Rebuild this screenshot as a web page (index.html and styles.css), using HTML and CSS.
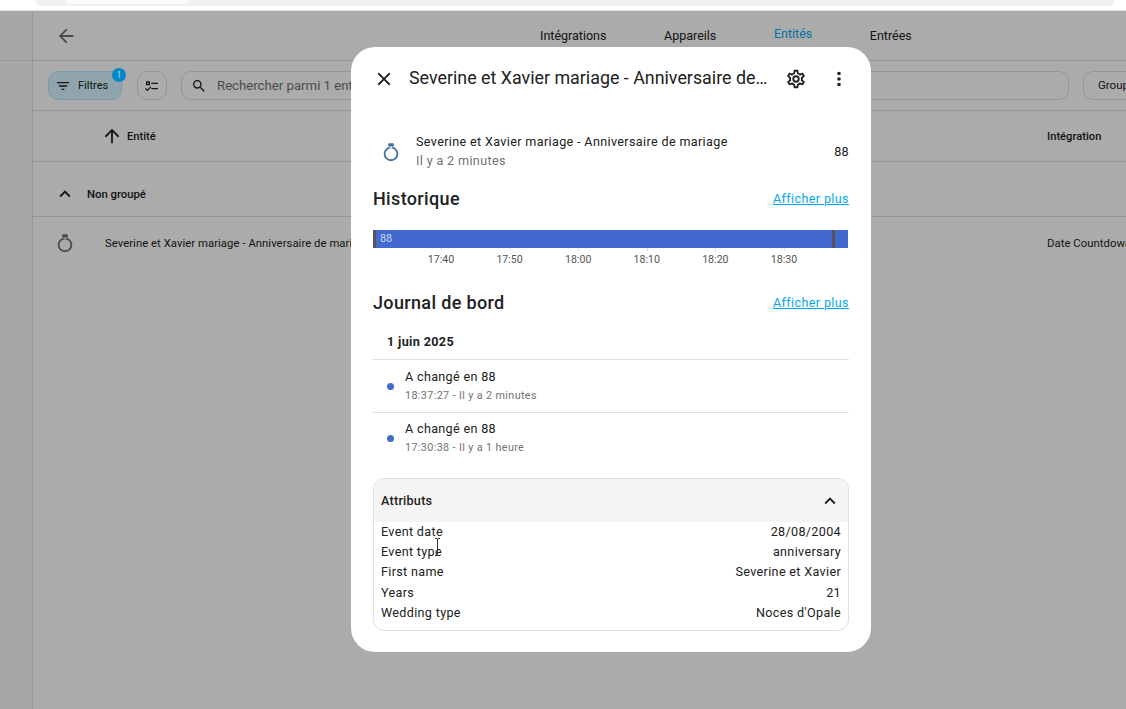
FILE: index.html
```html
<!DOCTYPE html>
<html>

<head>
    <title>Entités</title>
    <link rel="stylesheet" href="styles.css">
</head>

<body>
    <div class="browserbar">
        <div class="browserbar-inner">
            <div class="browserbar-tab"></div>
        </div>
    </div>

    <div class="app">
        <aside class="sidebar">
            <div class="sidebar-head"></div>
        </aside>

        <main class="main">
            <div class="toolbar">
                <svg class="icon back-icon" viewBox="0 0 24 24"><path d="M20,11V13H8L13.5,18.5L12.08,19.92L4.16,12L12.08,4.08L13.5,5.5L8,11H20Z"/></svg>
                <nav class="tabs">
                    <a>Intégrations</a>
                    <a>Appareils</a>
                    <a class="active">Entités</a>
                    <a>Entrées</a>
                </nav>
            </div>

            <div class="filterbar">
                <div class="filter-btn">
                    <svg class="icon" viewBox="0 0 24 24"><path d="M6,13H18V11H6M3,6V8H21V6M10,18H14V16H10V18Z"/></svg>
                    <span>Filtres</span>
                    <span class="badge">1</span>
                </div>
                <div class="select-btn">
                    <svg class="icon" viewBox="0 0 24 24"><path d="M3,5H9V11H3V5M5,7V9H7V7H5M11,7H21V9H11V7M11,15H21V17H11V15M5,20L1.5,16.5L2.91,15.09L5,17.17L9.59,12.59L11,14L5,20Z"/></svg>
                </div>
                <div class="search">
                    <svg class="icon" viewBox="0 0 24 24"><path d="M9.5,3A6.5,6.5 0 0,1 16,9.5C16,11.11 15.41,12.59 14.44,13.73L14.71,14H15.5L20.5,19L19,20.5L14,15.5V14.71L13.73,14.44C12.59,15.41 11.11,16 9.5,16A6.5,6.5 0 0,1 3,9.5A6.5,6.5 0 0,1 9.5,3M9.5,5C7,5 5,7 5,9.5C5,12 7,14 9.5,14C12,14 14,12 14,9.5C14,7 12,5 9.5,5Z"/></svg>
                    <span>Rechercher parmi 1 entité</span>
                </div>
                <div class="group-btn">Grouper par</div>
            </div>

            <div class="table-head">
                <div class="col-name">
                    <svg class="icon" viewBox="0 0 24 24"><path d="M13,20H11V8L5.5,13.5L4.08,12.08L12,4.16L19.92,12.08L18.5,13.5L13,8V20Z"/></svg>
                    <span>Entité</span>
                </div>
                <div class="col-integration">Intégration</div>
            </div>

            <div class="group-row">
                <svg class="icon" viewBox="0 0 24 24"><path d="M7.41,15.41L12,10.83L16.59,15.41L18,14L12,8L6,14L7.41,15.41Z"/></svg>
                <span>Non groupé</span>
            </div>

            <div class="table-row">
                <svg class="icon ring" viewBox="0 0 24 24"><path d="M12,6A8,8 0 0,0 4,14A8,8 0 0,0 12,22A8,8 0 0,0 20,14A8,8 0 0,0 12,6M12,8A6,6 0 0,1 18,14A6,6 0 0,1 12,20A6,6 0 0,1 6,14A6,6 0 0,1 12,8M9.5,2.5H14.5L15.5,4.5L12,8.5L8.5,4.5L9.5,2.5Z"/></svg>
                <span class="row-name">Severine et Xavier mariage - Anniversaire de mariage</span>
                <span class="row-integration">Date Countdown</span>
            </div>
        </main>

        <div class="scrim">
            <div class="dialog">
                <header class="dialog-head">
                    <svg class="icon" viewBox="0 0 24 24"><path d="M19,6.41L17.59,5L12,10.59L6.41,5L5,6.41L10.59,12L5,17.59L6.41,19L12,13.41L17.59,19L19,17.59L13.41,12L19,6.41Z"/></svg>
                    <h2>Severine et Xavier mariage - Anniversaire de mariage</h2>
                    <svg class="icon" viewBox="0 0 24 24"><path d="M12,8A4,4 0 0,1 16,12A4,4 0 0,1 12,16A4,4 0 0,1 8,12A4,4 0 0,1 12,8M12,10A2,2 0 0,0 10,12A2,2 0 0,0 12,14A2,2 0 0,0 14,12A2,2 0 0,0 12,10M10,22C9.75,22 9.54,21.82 9.5,21.58L9.13,18.93C8.5,18.68 7.96,18.34 7.44,17.94L4.95,18.95C4.73,19.03 4.46,18.95 4.34,18.73L2.34,15.27C2.21,15.05 2.27,14.78 2.46,14.63L4.57,12.97L4.5,12L4.57,11L2.46,9.37C2.27,9.22 2.21,8.95 2.34,8.73L4.34,5.27C4.46,5.05 4.73,4.96 4.95,5.05L7.44,6.05C7.96,5.66 8.5,5.32 9.13,5.07L9.5,2.42C9.54,2.18 9.75,2 10,2H14C14.25,2 14.46,2.18 14.5,2.42L14.87,5.07C15.5,5.32 16.04,5.66 16.56,6.05L19.05,5.05C19.27,4.96 19.54,5.05 19.66,5.27L21.66,8.73C21.79,8.95 21.73,9.22 21.54,9.37L19.43,11L19.5,12L19.43,13L21.54,14.63C21.73,14.78 21.79,15.05 21.66,15.27L19.66,18.73C19.54,18.95 19.27,19.04 19.05,18.95L16.56,17.95C16.04,18.34 15.5,18.68 14.87,18.93L14.5,21.58C14.46,21.82 14.25,22 14,22H10M11.25,4L10.88,6.61C9.68,6.86 8.62,7.5 7.85,8.39L5.44,7.35L4.69,8.65L6.8,10.2C6.4,11.37 6.4,12.64 6.8,13.8L4.68,15.36L5.43,16.66L7.86,15.62C8.63,16.5 9.68,17.14 10.87,17.38L11.24,20H12.76L13.13,17.39C14.32,17.14 15.37,16.5 16.14,15.62L18.57,16.66L19.32,15.36L17.2,13.81C17.6,12.64 17.6,11.37 17.2,10.2L19.31,8.65L18.56,7.35L16.15,8.39C15.38,7.5 14.32,6.86 13.12,6.62L12.75,4H11.25Z"/></svg>
                    <svg class="icon" viewBox="0 0 24 24"><path d="M12,16A2,2 0 0,1 14,18A2,2 0 0,1 12,20A2,2 0 0,1 10,18A2,2 0 0,1 12,16M12,10A2,2 0 0,1 14,12A2,2 0 0,1 12,14A2,2 0 0,1 10,12A2,2 0 0,1 12,10M12,4A2,2 0 0,1 14,6A2,2 0 0,1 12,8A2,2 0 0,1 10,6A2,2 0 0,1 12,4Z"/></svg>
                </header>

                <div class="state-row">
                    <svg class="icon ring-blue" viewBox="0 0 24 24"><path d="M12,6A8,8 0 0,0 4,14A8,8 0 0,0 12,22A8,8 0 0,0 20,14A8,8 0 0,0 12,6M12,8A6,6 0 0,1 18,14A6,6 0 0,1 12,20A6,6 0 0,1 6,14A6,6 0 0,1 12,8M9.5,2.5H14.5L15.5,4.5L12,8.5L8.5,4.5L9.5,2.5Z"/></svg>
                    <div class="state-info">
                        <div class="state-name">Severine et Xavier mariage - Anniversaire de mariage</div>
                        <div class="state-time">Il y a 2 minutes</div>
                    </div>
                    <div class="state-value">88</div>
                </div>

                <div class="section-head history-head">
                    <h3>Historique</h3>
                    <a>Afficher plus</a>
                </div>

                <div class="timeline">
                    <div class="timeline-bar">
                        <span class="timeline-mark"></span>
                        <span class="timeline-label">88</span>
                        <span class="timeline-mark"></span>
                    </div>
                    <div class="timeline-ticks">
                        <span>17:40</span>
                        <span>17:50</span>
                        <span>18:00</span>
                        <span>18:10</span>
                        <span>18:20</span>
                        <span>18:30</span>
                    </div>
                </div>

                <div class="section-head logbook-head">
                    <h3>Journal de bord</h3>
                    <a>Afficher plus</a>
                </div>

                <div class="log-date">1 juin 2025</div>
                <div class="log-entry">
                    <span class="dot"></span>
                    <div>
                        <div class="log-title">A changé en 88</div>
                        <div class="log-time">18:37:27 - Il y a 2 minutes</div>
                    </div>
                </div>
                <div class="log-entry">
                    <span class="dot"></span>
                    <div>
                        <div class="log-title">A changé en 88</div>
                        <div class="log-time">17:30:38 - Il y a 1 heure</div>
                    </div>
                </div>

                <section class="attributes">
                    <div class="attributes-head">
                        <span>Attributs</span>
                        <svg class="icon" viewBox="0 0 24 24"><path d="M7.41,15.41L12,10.83L16.59,15.41L18,14L12,8L6,14L7.41,15.41Z"/></svg>
                    </div>
                    <div class="attributes-body">
                        <div class="attr"><span>Event date</span><span>28/08/2004</span></div>
                        <div class="attr"><span>Event type</span><span>anniversary</span></div>
                        <div class="attr"><span>First name</span><span>Severine et Xavier</span></div>
                        <div class="attr"><span>Years</span><span>21</span></div>
                        <div class="attr"><span>Wedding type</span><span>Noces d'Opale</span></div>
                    </div>
                </section>
            </div>
        </div>

        <svg class="text-cursor" viewBox="0 0 7 18"><path d="M1,0.5H3L3.5,1L4,0.5H6M3.5,1V17M1,17.5H3L3.5,17L4,17.5H6" fill="none" stroke="#333" stroke-width="1"/></svg>
    </div>
</body>

</html>
```

FILE: styles.css
```css
* {
    box-sizing: border-box;
}

html,
body {
    height: 100%;
}

body {
    margin: 0;
    font-family: Roboto, "Liberation Sans", sans-serif;
    background-color: #fff;
    color: #212121;
    overflow: hidden;
}

h2,
h3 {
    margin: 0;
    font-weight: 500;
}

.icon {
    width: 22px;
    height: 22px;
    flex: none;
    fill: currentColor;
}

/* top strip of the browser */
.browserbar {
    height: 11px;
    padding-left: 35px;
    padding-right: 11px;
    border-bottom: 1px solid #e0e0e0;
}

.browserbar-inner {
    height: 6px;
    background-color: #f1f1f1;
    border-radius: 0 0 6px 6px;
    padding-left: 30px;
}

.browserbar-tab {
    width: 124px;
    height: 4px;
    background-color: #fafafa;
    border-radius: 0 0 4px 4px;
}

/* page behind the dialog */
.app {
    position: relative;
    display: flex;
    height: 698px;
    background-color: #fff;
}

.sidebar {
    width: 33px;
    flex: none;
    border-right: 1px solid #e0e0e0;
    background-color: #fafafa;
}

.sidebar-head {
    height: 50px;
    border-bottom: 1px solid #e0e0e0;
}

.main {
    flex: 1;
    min-width: 0;
    overflow: hidden;
}

.toolbar {
    height: 50px;
    display: flex;
    align-items: center;
    border-bottom: 1px solid #e0e0e0;
    padding-left: 22px;
    color: #212121;
}

.back-icon {
    color: #727272;
}

.tabs {
    display: flex;
    margin-left: 463px;
    font-size: 12.5px;
}

.tabs a {
    margin-right: 57.6px;
}

.tabs .active {
    color: #03a9f4;
    margin-top: -2px;
}

.filterbar {
    height: 50px;
    display: flex;
    align-items: center;
    border-bottom: 1px solid #e0e0e0;
    padding-left: 15px;
    font-size: 11px;
    white-space: nowrap;
}

.filter-btn {
    position: relative;
    width: 74px;
    height: 29px;
    flex: none;
    display: flex;
    align-items: center;
    gap: 7px;
    padding-left: 6px;
    border-radius: 10px;
    border: 1px solid #bde5fa;
    background-color: #d5f5ff;
}

.filter-btn .icon,
.select-btn .icon,
.search .icon {
    width: 16px;
    height: 16px;
}

.badge {
    position: absolute;
    top: -4px;
    right: -5px;
    z-index: 1;
    width: 14px;
    height: 14px;
    border-radius: 50%;
    background-color: #0587c6;
    color: #a9d3e8;
    font-size: 9px;
    line-height: 14px;
    text-align: center;
}

.select-btn {
    width: 30px;
    height: 29px;
    margin-left: 15px;
    flex: none;
    display: flex;
    align-items: center;
    justify-content: center;
    border: 1px solid #e0e0e0;
    border-radius: 10px;
}

.search {
    width: 888px;
    height: 29px;
    margin-left: 14px;
    flex: none;
    display: flex;
    align-items: center;
    gap: 10px;
    padding-left: 9px;
    border: 1px solid #e0e0e0;
    border-radius: 10px;
    color: #212121;
    font-size: 13.2px;
}

.search span {
    color: #727272;
}

.group-btn {
    width: 100px;
    height: 29px;
    margin-left: 14px;
    flex: none;
    padding-left: 14px;
    line-height: 27px;
    border: 1px solid #e0e0e0;
    border-radius: 10px;
    font-size: 11.5px;
}

.table-head {
    height: 51px;
    display: flex;
    align-items: center;
    border-bottom: 1px solid #e0e0e0;
    font-size: 11.2px;
    font-weight: 500;
}

.col-name {
    width: 1014px;
    display: flex;
    align-items: center;
    gap: 4px;
    padding-left: 68px;
    flex: none;
}

.group-row {
    height: 55px;
    display: flex;
    align-items: center;
    gap: 11px;
    padding: 10px 0 0 21px;
    border-bottom: 1px solid #e0e0e0;
    font-size: 11.3px;
    font-weight: 500;
}

.table-row {
    height: 52px;
    display: flex;
    align-items: center;
    padding-left: 21px;
    font-size: 11.3px;
    letter-spacing: 0.05px;
    white-space: nowrap;
}

.row-name {
    width: 942px;
    margin-left: 29px;
    flex: none;
}

.ring {
    color: #727272;
}

/* dialog */
.scrim {
    position: absolute;
    top: 0;
    left: 0;
    right: 0;
    bottom: 0;
    padding: 36px 0 0 351px;
    background-color: rgba(0, 0, 0, 0.33);
}

.dialog {
    width: 520px;
    height: 605px;
    padding: 0 22px;
    background-color: #fff;
    border-radius: 24px;
}

.dialog-head {
    height: 62px;
    display: flex;
    align-items: center;
    padding-top: 2px;
}

.dialog-head h2 {
    width: 360px;
    margin: 0 16px 2px 14px;
    flex: none;
    font-size: 17.85px;
    font-weight: 400;
    line-height: 22px;
    white-space: nowrap;
    overflow: hidden;
    text-overflow: ellipsis;
}

.dialog-head .icon:last-child {
    margin-left: 21px;
}

.state-row {
    height: 50px;
    margin-top: 18px;
    display: flex;
    align-items: center;
    font-size: 12.6px;
    letter-spacing: 0.35px;
}

.ring-blue {
    color: #44739e;
    margin-left: 7px;
}

.state-info {
    flex: 1;
    margin-left: 14px;
}

.state-name {
    line-height: 18px;
}

.state-time {
    line-height: 20px;
    color: #727272;
}

.state-value {
    margin-bottom: 2px;
}

.section-head {
    display: flex;
    justify-content: space-between;
    align-items: center;
}

.section-head h3 {
    font-size: 18px;
    line-height: 24px;
    letter-spacing: 0.35px;
}

.section-head a {
    margin-bottom: 2px;
    color: #03a9f4;
    font-size: 12.6px;
    letter-spacing: 0.37px;
    text-decoration: underline;
}

.history-head {
    margin-top: 10px;
}

.timeline {
    margin-top: 19px;
    margin-right: 1px;
}

.timeline-bar {
    height: 18px;
    display: flex;
    align-items: stretch;
    padding-right: 13px;
    background-color: #4269d0;
    font-size: 10.8px;
    line-height: 17px;
    color: #c9d4f2;
}

.timeline-mark {
    width: 3px;
    background-color: #555;
}

.timeline-label {
    flex: 1;
    padding-left: 4px;
}

.timeline-ticks {
    display: grid;
    grid-template-columns: repeat(6, 68.6px);
    padding-left: 33.7px;
    font-size: 10.6px;
    color: #555;
    text-align: center;
}

.timeline-ticks span {
    position: relative;
    padding-top: 5px;
    line-height: 14px;
}

.timeline-ticks span::before {
    content: "";
    position: absolute;
    top: 0;
    left: 50%;
    width: 1px;
    height: 3px;
    background-color: #ddd;
}

.logbook-head {
    margin-top: 24px;
}

.log-date {
    height: 45px;
    padding: 19px 0 0 14px;
    font-size: 12.6px;
    font-weight: 700;
    letter-spacing: 0.35px;
    line-height: 15px;
    border-bottom: 1px solid #e0e0e0;
}

.log-entry {
    height: 53px;
    padding-top: 1px;
    display: flex;
    align-items: center;
    border-bottom: 1px solid #e0e0e0;
}

.log-entry:last-of-type {
    height: 50px;
    border-bottom: none;
}

.dot {
    width: 7px;
    height: 7px;
    margin: -1px 11px 0 14px;
    border-radius: 50%;
    background-color: #4269d0;
    flex: none;
}

.log-title {
    font-size: 12.6px;
    letter-spacing: 0.32px;
    line-height: 18px;
}

.log-time {
    padding-top: 1px;
    font-size: 10.8px;
    letter-spacing: 0.36px;
    line-height: 18px;
    color: #727272;
}

.attributes {
    margin-top: 15px;
    height: 153px;
    border: 1px solid #e0e0e0;
    border-radius: 11px;
    overflow: hidden;
}

.attributes-head {
    height: 43px;
    display: flex;
    align-items: center;
    justify-content: space-between;
    padding: 0 7px;
    background-color: #f4f4f4;
    font-size: 12.6px;
    font-weight: 500;
    letter-spacing: 0.25px;
}

.attributes-body {
    margin-top: -0.55px;
    padding: 0 7px;
    font-size: 12.6px;
    letter-spacing: 0.33px;
}

.attr {
    height: 20.2px;
    display: flex;
    justify-content: space-between;
    align-items: center;
}

.text-cursor {
    position: absolute;
    left: 434px;
    top: 527px;
    width: 7px;
    height: 18px;
}
```
